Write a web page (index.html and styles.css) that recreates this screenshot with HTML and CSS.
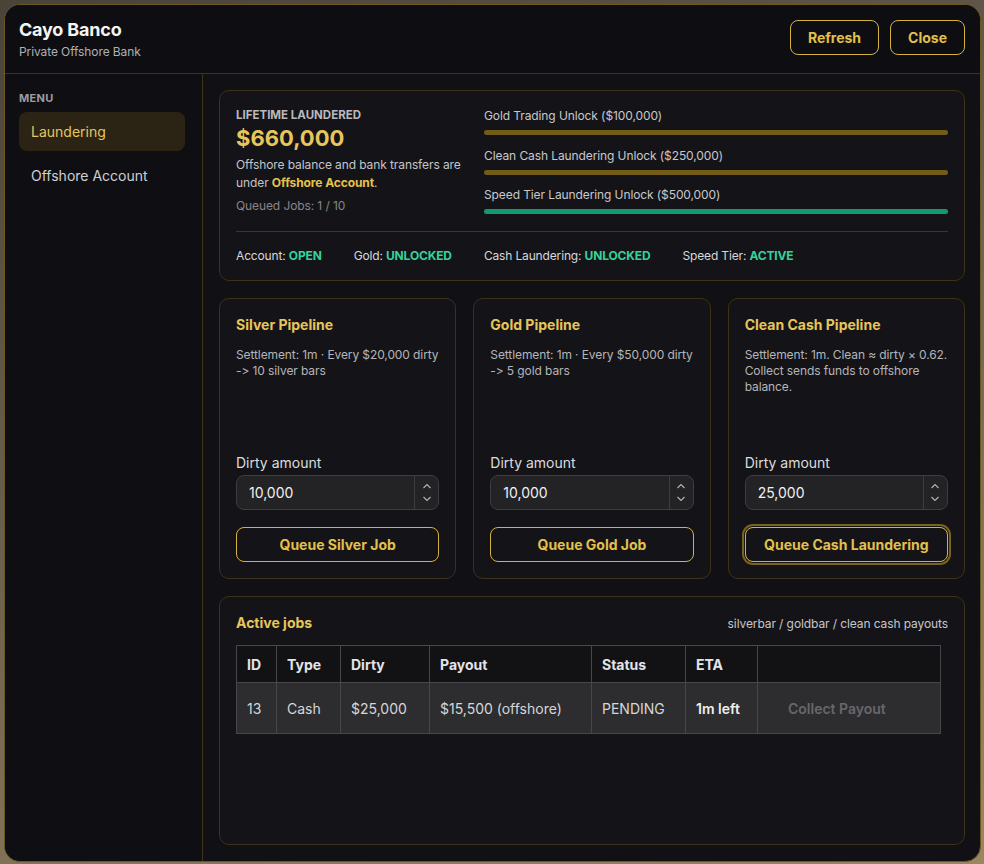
FILE: index.html
```html
<!DOCTYPE html>
<html lang="en">
<head>
<meta charset="utf-8">
<title>Cayo Banco</title>
<link rel="stylesheet" href="styles.css">
</head>
<body>
<div class="window">
  <header class="topbar">
    <div class="brand">
      <h1 class="brand-title">Cayo Banco</h1>
      <p class="brand-sub">Private Offshore Bank</p>
    </div>
    <div class="top-actions">
      <button class="btn btn-top">Refresh</button>
      <button class="btn btn-top btn-close">Close</button>
    </div>
  </header>
  <div class="layout">
    <aside class="sidebar">
      <div class="menu-label">MENU</div>
      <a class="nav-item active">Laundering</a>
      <a class="nav-item">Offshore Account</a>
    </aside>
    <main class="content">
      <section class="card summary">
        <div class="summary-grid">
          <div class="summary-left">
            <div class="eyebrow">LIFETIME LAUNDERED</div>
            <div class="amount">$660,000</div>
            <p class="summary-desc">Offshore balance and bank transfers are under <strong class="gold">Offshore Account</strong>.</p>
            <div class="queued">Queued Jobs: 1 / 10</div>
          </div>
          <div class="summary-right">
            <div class="progress-item">
              <div class="progress-label">Gold Trading Unlock ($100,000)</div>
              <div class="bar bar-gold"></div>
            </div>
            <div class="progress-item">
              <div class="progress-label">Clean Cash Laundering Unlock ($250,000)</div>
              <div class="bar bar-gold"></div>
            </div>
            <div class="progress-item">
              <div class="progress-label">Speed Tier Laundering Unlock ($500,000)</div>
              <div class="bar bar-green"></div>
            </div>
          </div>
        </div>
        <div class="divider"></div>
        <div class="status-row">
          <span>Account: <b class="ok">OPEN</b></span>
          <span>Gold: <b class="ok">UNLOCKED</b></span>
          <span>Cash Laundering: <b class="ok">UNLOCKED</b></span>
          <span>Speed Tier: <b class="ok">ACTIVE</b></span>
        </div>
      </section>

      <div class="pipelines">
        <section class="card pipe">
          <h2 class="card-title">Silver Pipeline</h2>
          <p class="pipe-desc">Settlement: 1m · Every $20,000 dirty -&gt; 10 silver bars</p>
          <label class="field-label">Dirty amount</label>
          <div class="numfield">
            <input class="num-input" type="text" value="10,000" size="4">
            <div class="spin">
              <svg width="10" height="6" viewBox="0 0 10 6"><path d="M1.5 5L5 1.5L8.5 5" fill="none" stroke="#b5b5b8" stroke-width="1.1"/></svg>
              <svg width="10" height="6" viewBox="0 0 10 6"><path d="M1.5 1L5 4.5L8.5 1" fill="none" stroke="#b5b5b8" stroke-width="1.1"/></svg>
            </div>
          </div>
          <button class="btn btn-action">Queue Silver Job</button>
        </section>
        <section class="card pipe">
          <h2 class="card-title">Gold Pipeline</h2>
          <p class="pipe-desc">Settlement: 1m · Every $50,000 dirty -&gt; 5 gold bars</p>
          <label class="field-label">Dirty amount</label>
          <div class="numfield">
            <input class="num-input" type="text" value="10,000" size="4">
            <div class="spin">
              <svg width="10" height="6" viewBox="0 0 10 6"><path d="M1.5 5L5 1.5L8.5 5" fill="none" stroke="#b5b5b8" stroke-width="1.1"/></svg>
              <svg width="10" height="6" viewBox="0 0 10 6"><path d="M1.5 1L5 4.5L8.5 1" fill="none" stroke="#b5b5b8" stroke-width="1.1"/></svg>
            </div>
          </div>
          <button class="btn btn-action">Queue Gold Job</button>
        </section>
        <section class="card pipe">
          <h2 class="card-title">Clean Cash Pipeline</h2>
          <p class="pipe-desc">Settlement: 1m. Clean ≈ dirty × 0.62. Collect sends funds to offshore balance.</p>
          <label class="field-label">Dirty amount</label>
          <div class="numfield">
            <input class="num-input" type="text" value="25,000" size="4">
            <div class="spin">
              <svg width="10" height="6" viewBox="0 0 10 6"><path d="M1.5 5L5 1.5L8.5 5" fill="none" stroke="#b5b5b8" stroke-width="1.1"/></svg>
              <svg width="10" height="6" viewBox="0 0 10 6"><path d="M1.5 1L5 4.5L8.5 1" fill="none" stroke="#b5b5b8" stroke-width="1.1"/></svg>
            </div>
          </div>
          <button class="btn btn-action is-focused">Queue Cash Laundering</button>
        </section>
      </div>

      <section class="card jobs">
        <div class="jobs-head">
          <h2 class="card-title">Active jobs</h2>
          <span class="jobs-note">silverbar / goldbar / clean cash payouts</span>
        </div>
        <table class="jobs-table">
          <colgroup>
            <col class="c-id"><col class="c-type"><col class="c-dirty"><col class="c-payout"><col class="c-status"><col class="c-eta"><col class="c-action">
          </colgroup>
          <thead>
            <tr><th>ID</th><th>Type</th><th>Dirty</th><th>Payout</th><th>Status</th><th>ETA</th><th></th></tr>
          </thead>
          <tbody>
            <tr>
              <td>13</td><td>Cash</td><td>$25,000</td><td>$15,500 (offshore)</td><td>PENDING</td><td class="eta">1m left</td>
              <td><button class="collect" disabled>Collect Payout</button></td>
            </tr>
          </tbody>
        </table>
      </section>
    </main>
  </div>
</div>
</body>
</html>
```

FILE: styles.css
```css
* { box-sizing: border-box; margin: 0; padding: 0; }
html, body { height: 100%; }
body {
  background: linear-gradient(160deg, #4a4338 0%, #6b604f 45%, #9a865f 100%);
  font-family: Inter, "Liberation Sans", sans-serif;
  font-feature-settings: "calt" 0, "liga" 0;
  color: #d4d4d7;
  padding: 4px;
  overflow: hidden;
}
.window {
  width: 977px;
  height: 858px;
  background: #111115;
  border: 1px solid #6a5823;
  border-radius: 16px;
  overflow: hidden;
  display: flex;
  flex-direction: column;
}
.topbar {
  height: 69px;
  flex: none;
  display: flex;
  align-items: center;
  justify-content: space-between;
  padding: 0 15px 0 14px;
  border-bottom: 1px solid #3e3518;
  background: #0e0e12;
}
.brand-title { font-size: 18px; line-height: 22px; font-weight: 700; color: #f4f4f4; letter-spacing: -0.2px; }
.brand-sub { font-size: 12px; line-height: 16px; color: #b0b0b4; margin-top: 3px; letter-spacing: -0.1px; }
.top-actions { display: flex; gap: 11px; margin-top: -3px; }
.btn {
  font-family: inherit;
  font-feature-settings: "calt" 0;
  background: transparent;
  border: 1px solid #d4b23e;
  border-radius: 8px;
  color: #e2c04c;
  font-weight: 700;
  font-size: 14px;
  cursor: pointer;
}
.btn-top { height: 35px; padding: 0 17px; }

.layout { flex: 1; display: flex; min-height: 0; }
.sidebar {
  width: 198px;
  flex: none;
  border-right: 1px solid #3e3518;
  padding: 17px 17px 0 14px;
  background: #0f0f13;
}
.menu-label { font-size: 11px; line-height: 14px; font-weight: 700; color: #9c9ca2; letter-spacing: 0.3px; margin-bottom: 7px; }
.nav-item {
  display: flex;
  align-items: center;
  height: 39px;
  padding: 0 12px;
  border-radius: 8px;
  font-size: 14px;
  color: #d0d0d3;
  margin-bottom: 5px;
}
.nav-item.active { background: #2b2414; color: #e6c55e; }

.content {
  flex: 1;
  display: flex;
  flex-direction: column;
  gap: 17px;
  padding: 16px 15px 16px 16px;
  min-width: 0;
}
.card {
  background: #141418;
  border: 1px solid #3b3217;
  border-radius: 10px;
  min-width: 0;
}
.summary { padding: 17px 16px 16px; flex: none; }
.summary-grid { display: grid; grid-template-columns: 232px minmax(0, 1fr); column-gap: 16px; }
.eyebrow { font-size: 11.5px; line-height: 14px; font-weight: 700; color: #b9b9be; }
.amount { font-size: 22px; line-height: 26px; font-weight: 700; color: #e8c65c; margin-top: 3px; }
.summary-desc { font-size: 12px; line-height: 18px; color: #c4c4c8; margin-top: 5px; letter-spacing: -0.1px; }
.gold { color: #e6c24e; font-weight: 700; }
.queued { font-size: 12px; line-height: 16px; color: #86868c; margin-top: 6px; letter-spacing: -0.1px; }
.progress-item + .progress-item { margin-top: 12.5px; }
.progress-label { font-size: 12px; line-height: 16px; color: #c8c8cc; letter-spacing: -0.1px; }
.bar { height: 5px; border-radius: 3px; margin-top: 6px; }
.bar-gold { background: #735c17; }
.bar-green { background: #139a6c; }
.divider { height: 1px; background: #38383c; margin-top: 17px; }
.status-row { display: flex; gap: 32px; font-size: 12px; line-height: 17px; color: #d8d8db; padding-top: 15px; letter-spacing: -0.15px; }
.ok { color: #33d39b; font-weight: 700; }

.pipelines { display: grid; grid-template-columns: repeat(3, minmax(0, 1fr)); gap: 17px; height: 281px; flex: none; }
.pipe { padding: 16px; display: flex; flex-direction: column; }
.card-title { font-size: 14px; line-height: 18px; font-weight: 700; color: #e6c55c; }
.pipe .card-title { margin-top: 1px; }
.pipe-desc { font-size: 12px; line-height: 16px; color: #b4b4b9; margin-top: 13px; letter-spacing: -0.1px; }
.field-label { font-size: 14px; line-height: 18px; color: #dcdcdf; margin-top: auto; }
.numfield {
  margin-top: 3px;
  height: 35px;
  display: flex;
  background: #232325;
  border: 1px solid #3d3d40;
  border-radius: 8px;
  overflow: hidden;
}
.num-input {
  flex: 1;
  width: 0;
  min-width: 0;
  background: transparent;
  border: none;
  outline: none;
  font-family: inherit;
  font-size: 14px;
  color: #f0f0f2;
  padding: 0 12px;
}
.spin {
  width: 24px;
  flex: none;
  border-left: 1px solid #3d3d40;
  display: flex;
  flex-direction: column;
  align-items: center;
  justify-content: space-around;
  padding: 4px 0;
}
.btn-action { height: 35px; width: 100%; margin-top: 17px; }
.btn-action.is-focused { box-shadow: 0 0 0 1px #16140e, 0 0 0 3px #7a6220; }

.jobs { flex: 1; padding: 17px 16px 16px; }
.jobs-head { display: flex; justify-content: space-between; align-items: center; }
.jobs-note { font-size: 12px; color: #c6c6ca; letter-spacing: -0.1px; }
.jobs-table {
  margin-top: 13px;
  width: 704px;
  table-layout: fixed;
  border-collapse: collapse;
  font-size: 14px;
}
.c-id { width: 40px; } .c-type { width: 64px; } .c-dirty { width: 89px; } .c-payout { width: 162px; }
.c-status { width: 94px; } .c-eta { width: 72px; } .c-action { width: 183px; }
.jobs-table th, .jobs-table td { border: 1px solid #47474b; padding: 0 10px; text-align: left; }
.jobs-table th { height: 37px; background: #121215; color: #e4e4e7; font-weight: 700; }
.jobs-table td { height: 51px; background: #2d2d2f; color: #d6d6d9; }
.jobs-table td.eta { font-weight: 600; color: #eeeef0; }
.collect {
  font-family: inherit;
  font-size: 14px;
  font-weight: 600;
  color: #67676b;
  background: transparent;
  border: none;
  padding: 8px 20px;
}
```
